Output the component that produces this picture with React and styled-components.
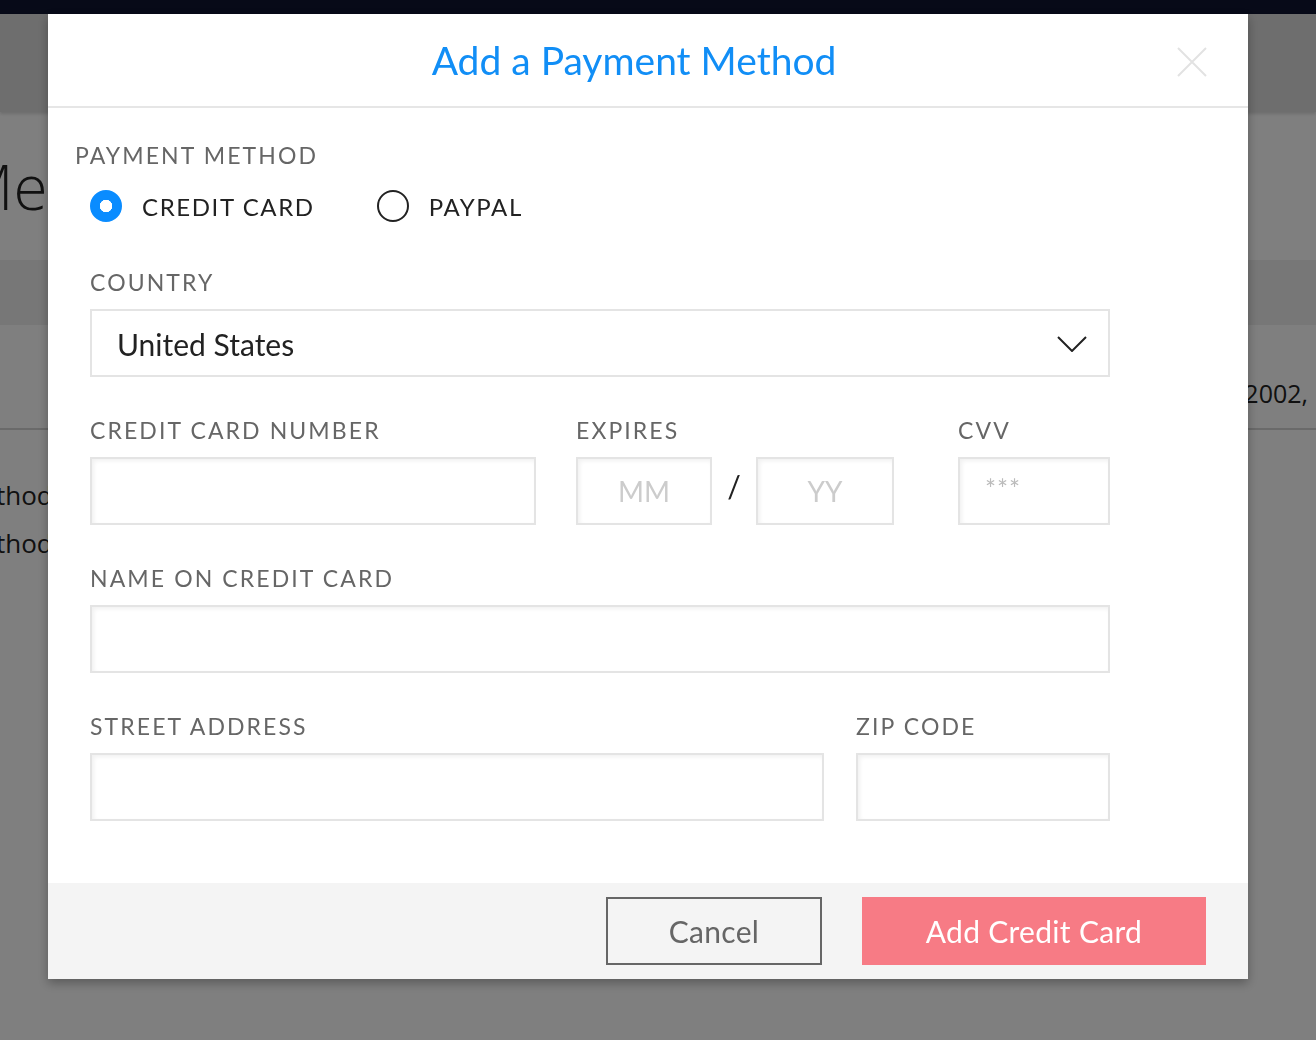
import React from "react"
import styled, { createGlobalStyle } from "styled-components"

const GlobalStyle = createGlobalStyle`
  html, body {
    margin: 0;
    padding: 0;
    overflow: hidden;
  }
  body {
    font-family: Lato, "Open Sans", sans-serif;
  }
  * { box-sizing: border-box; }
`

export default function App() {
  return (
    <>
      <GlobalStyle />
      <Page>
        <TopBar />
        <NavBar />
        <PageHeading>Methods</PageHeading>
        <Band />
        <Row><RowText>Since 2002,</RowText></Row>
        <Lines>
          <Line>Method</Line>
          <Line>Method</Line>
        </Lines>
      </Page>

      <Overlay>
        <Modal>
          <Header>
            <Title>Add a Payment Method</Title>
            <Close aria-label="close">
              <svg width="30" height="30" viewBox="0 0 30 30">
                <path d="M1 1 L29 29 M29 1 L1 29" stroke="#e2e2e2" strokeWidth="2" fill="none" />
              </svg>
            </Close>
          </Header>

          <Body>
            <MethodBlock>
              <Label>Payment Method</Label>
              <Radios>
                <Radio><Dot checked />Credit Card</Radio>
                <Radio><Dot />PayPal</Radio>
              </Radios>
            </MethodBlock>

            <Field>
              <Label>Country</Label>
              <Select>
                United States
                <svg width="30" height="16" viewBox="0 0 30 16">
                  <path d="M1 1 L15 15 L29 1" stroke="#222" strokeWidth="2" fill="none" />
                </svg>
              </Select>
            </Field>

            <Grid cols="446px 318px 1fr" gap="40px">
              <Field>
                <Label>Credit Card Number</Label>
                <Input />
              </Field>
              <Field>
                <Label>Expires</Label>
                <Expiry>
                  <Input center w="136px">MM</Input>
                  <Slash>/</Slash>
                  <Input center w="138px">YY</Input>
                </Expiry>
              </Field>
              <Field w="152px">
                <Label>CVV</Label>
                <Input stars>***</Input>
              </Field>
            </Grid>

            <Field>
              <Label>Name on Credit Card</Label>
              <Input />
            </Field>

            <Grid cols="734px 1fr" gap="32px">
              <Field last>
                <Label>Street Address</Label>
                <Input />
              </Field>
              <Field last>
                <Label>Zip Code</Label>
                <Input />
              </Field>
            </Grid>
          </Body>

          <Footer>
            <CancelButton>Cancel</CancelButton>
            <SubmitButton>Add Credit Card</SubmitButton>
          </Footer>
        </Modal>
      </Overlay>
    </>
  )
}

/* page behind the overlay */

const Page = styled.div`
  height: 1040px;
  background: #fff;
  font-family: "Open Sans", sans-serif;
  color: #222;
  overflow: hidden;
`

const TopBar = styled.div`
  height: 14px;
  background: #0e1430;
`

const NavBar = styled.div`
  height: 98px;
  background: #dcdcdc;
  box-shadow: 0 2px 3px rgba(0, 0, 0, 0.15);
`

const PageHeading = styled.h1`
  margin: 0;
  height: 148px;
  font-size: 62px;
  font-weight: 300;
  line-height: 148px;
  text-indent: -40px;
  white-space: nowrap;
`

const Band = styled.div`
  height: 65px;
  background: #eeeeee;
`

const Row = styled.div`
  height: 105px;
  border-bottom: 2px solid #d4d4d4;
  display: flex;
  justify-content: flex-end;
  align-items: flex-end;
  padding: 0 8px 20px 0;
`

const RowText = styled.span`
  font-size: 25px;
  line-height: 30px;
`

const Lines = styled.div`
  padding-top: 41px;
`

const Line = styled.div`
  font-size: 26px;
  line-height: 48px;
  text-indent: -42px;
  white-space: nowrap;
`

/* modal */

const Overlay = styled.div`
  position: fixed;
  inset: 0;
  background: rgba(0, 0, 0, 0.5);
  display: flex;
  align-items: flex-start;
  padding: 14px 0 0 48px;
`

const Modal = styled.div`
  width: 1200px;
  background: #fff;
  box-shadow: 0 4px 10px rgba(0, 0, 0, 0.3);
  font-family: Lato, sans-serif;
`

const Header = styled.div`
  position: relative;
  height: 94px;
  border-bottom: 2px solid #e6e6e6;
  display: flex;
  align-items: center;
  justify-content: center;
  padding-right: 28px;
`

const Title = styled.h2`
  margin: 0;
  font-size: 39px;
  font-weight: 400;
  color: #118ef6;
`

const Close = styled.div`
  position: absolute;
  right: 41px;
  top: 33px;
  width: 30px;
  height: 30px;
  display: flex;
`

const Body = styled.div`
  padding: 34px 138px 62px 42px;
`

const MethodBlock = styled.div`
  margin-left: -15px;
  margin-bottom: 47px;
`

const Label = styled.div`
  font-size: 23px;
  line-height: 26px;
  letter-spacing: 2.1px;
  text-transform: uppercase;
  color: #666;
  margin-bottom: 14px;
  white-space: nowrap;
`

const Radios = styled.div`
  display: flex;
  gap: 62px;
  margin-left: 15px;
  margin-top: 22px;
`

const Radio = styled.label`
  display: flex;
  align-items: center;
  gap: 20px;
  font-size: 24px;
  letter-spacing: 1.6px;
  text-transform: uppercase;
  color: #222;
  height: 32px;
`

const Dot = styled.span`
  width: 32px;
  height: 32px;
  border-radius: 50%;
  flex: none;
  background: ${p => (p.checked ? "radial-gradient(circle, #fff 0 6px, #0a8cff 6.5px)" : "#fff")};
  border: 2px solid ${p => (p.checked ? "#0a8cff" : "#222")};
`

const Field = styled.div`
  margin-bottom: ${p => (p.last ? "0" : "40px")};
  ${p => p.w && `width: ${p.w}; justify-self: end;`}
`

const Grid = styled.div`
  display: grid;
  grid-template-columns: ${p => p.cols};
  column-gap: ${p => p.gap};
`

const Input = styled.div`
  height: 68px;
  ${p => (p.w ? `width: ${p.w}; flex: none;` : "")}
  border: 2px solid #e4e4e4;
  box-shadow: inset 2px 2px 4px rgba(0, 0, 0, 0.06);
  background: #fff;
  display: flex;
  align-items: ${p => (p.stars ? "flex-start" : "center")};
  justify-content: ${p => (p.center ? "center" : "flex-start")};
  padding: ${p => (p.stars ? "14px 0 0 25px" : "0")};
  font-size: ${p => (p.stars ? "26px" : "28px")};
  letter-spacing: ${p => (p.stars ? "1px" : "0")};
  color: ${p => (p.stars ? "#bbb" : "#ccc")};
`

const Expiry = styled.div`
  display: flex;
  align-items: center;
`

const Slash = styled.span`
  width: 44px;
  text-align: center;
  font-size: 30px;
  color: #222;
  margin-top: -10px;
`

const Select = styled.div`
  height: 68px;
  border: 2px solid #e4e4e4;
  display: flex;
  align-items: center;
  justify-content: space-between;
  padding: 2px 21px 0 25px;
  font-size: 30px;
  color: #222;
`

const Footer = styled.div`
  background: #f4f4f4;
  height: 96px;
  display: flex;
  align-items: center;
  justify-content: flex-end;
  gap: 40px;
  padding: 0 42px;
`

const Button = styled.button`
  height: 68px;
  font-family: Lato, sans-serif;
  font-size: 30px;
  letter-spacing: 0.3px;
  cursor: pointer;
`

const CancelButton = styled(Button)`
  width: 216px;
  background: transparent;
  border: 2px solid #666;
  color: #666;
`

const SubmitButton = styled(Button)`
  width: 344px;
  background: #f77b85;
  border: none;
  color: #fff;
`
